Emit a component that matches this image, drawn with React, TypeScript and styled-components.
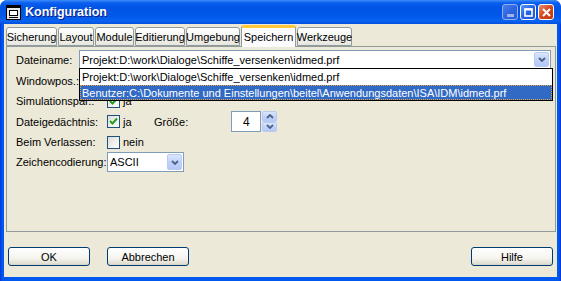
import styled, { createGlobalStyle } from "styled-components";

const GlobalStyle = createGlobalStyle`
  body {
    margin: 0;
    font-family: "Liberation Sans", Arial, sans-serif;
    font-size: 11px;
    color: #000;
  }
`;

const tabs = [
  { label: "Sicherung", w: 51 },
  { label: "Layout", w: 36 },
  { label: "Module", w: 39 },
  { label: "Editierung", w: 50 },
  { label: "Umgebung", w: 54 },
  { label: "Speichern", w: 55, active: true },
  { label: "Werkzeuge", w: 55 },
];

const Chevron = ({ down = true }: { down?: boolean }) => (
  <svg width="8" height="5" viewBox="0 0 8 5">
    <path
      d={down ? "M1 1 L4 4 L7 1" : "M1 4 L4 1 L7 4"}
      fill="none"
      stroke="#4D6185"
      strokeWidth="1.8"
    />
  </svg>
);

const CheckMark = () => (
  <svg width="9" height="9" viewBox="0 0 9 9">
    <path d="M1 4 L3.5 6.5 L8 1.5" fill="none" stroke="#21A121" strokeWidth="2" />
  </svg>
);

const WinIcon = () => (
  <svg width="15" height="15" viewBox="0 0 15 15">
    <rect x="0.5" y="0.5" width="14" height="14" fill="#E8E8E8" stroke="#000" />
    <rect x="1" y="1" width="13" height="2" fill="#000" />
    <rect x="3.5" y="5.5" width="8" height="5" fill="#FFF" stroke="#000" />
    <rect x="3" y="12" width="9" height="1" fill="#000" />
  </svg>
);

const App = () => {
  return (
    <>
      <GlobalStyle />
      <Window>
        <TitleBar>
          <WinIcon />
          <Title>Konfiguration</Title>
          <Controls>
            <CtrlBtn kind="min">
              <svg width="7" height="3" viewBox="0 0 7 3">
                <rect width="7" height="3" fill="#9DB3EE" />
              </svg>
            </CtrlBtn>
            <CtrlBtn kind="max">
              <svg width="9" height="9" viewBox="0 0 9 9">
                <rect x="1" y="1" width="7" height="7" fill="none" stroke="#fff" strokeWidth="1.6" />
                <rect x="0.5" y="0.5" width="8" height="2" fill="#fff" />
              </svg>
            </CtrlBtn>
            <CtrlBtn kind="close">
              <svg width="9" height="9" viewBox="0 0 9 9">
                <path d="M1 1 L8 8 M8 1 L1 8" stroke="#fff" strokeWidth="2" />
              </svg>
            </CtrlBtn>
          </Controls>
        </TitleBar>
        <Client>
          <TabRow>
            {tabs.map((t) => (
              <Tab key={t.label} w={t.w} active={t.active}>
                {t.label}
              </Tab>
            ))}
          </TabRow>
          <Panel>
            <Row top={3} h={19}>
              <Label w={63}>Dateiname:</Label>
              <Combo w={472}>
                <ComboText>Projekt:D:\work\Dialoge\Schiffe_versenken\idmed.prf</ComboText>
                <ArrowBtn>
                  <Chevron />
                </ArrowBtn>
                <DropList>
                  <ListItem>Projekt:D:\work\Dialoge\Schiffe_versenken\idmed.prf</ListItem>
                  <ListItem selected>
                    Benutzer:C:\Dokumente und Einstellungen\beitel\Anwendungsdaten\ISA\IDM\idmed.prf
                  </ListItem>
                </DropList>
              </Combo>
            </Row>
            <Row top={2} h={20}>
              <Label w={91}>Windowpos.:</Label>
            </Row>
            <Row h={20}>
              <Label w={91}>Simulationspar.:</Label>
              <Check>
                <CheckMark />
              </Check>
              <CheckText w={34}>ja</CheckText>
            </Row>
            <Row h={21}>
              <Label w={91}>Dateigedächtnis:</Label>
              <Check>
                <CheckMark />
              </Check>
              <CheckText w={34}>ja</CheckText>
              <Label w={77}>Größe:</Label>
              <SpinEdit>4</SpinEdit>
              <SpinBtns>
                <SpinBtn>
                  <Chevron down={false} />
                </SpinBtn>
                <SpinBtn>
                  <Chevron />
                </SpinBtn>
              </SpinBtns>
            </Row>
            <Row h={20}>
              <Label w={91}>Beim Verlassen:</Label>
              <Check />
              <CheckText w={34}>nein</CheckText>
            </Row>
            <Row h={20}>
              <Label w={91}>Zeichencodierung:</Label>
              <Combo w={77}>
                <ComboText>ASCII</ComboText>
                <ArrowBtn>
                  <Chevron />
                </ArrowBtn>
              </Combo>
            </Row>
          </Panel>
          <ButtonRow>
            <Button>OK</Button>
            <Button>Abbrechen</Button>
            <Spacer />
            <Button>Hilfe</Button>
          </ButtonRow>
        </Client>
      </Window>
    </>
  );
};

export default App;

const Window = styled.div`
  width: 561px;
  height: 281px;
  box-sizing: border-box;
  background: linear-gradient(90deg, #0831D9 0px, #0058EE 2px, #0058EE calc(100% - 2px), #0831D9 100%);
  border-radius: 7px 7px 0 0;
  display: flex;
  flex-direction: column;
  overflow: hidden;
`;

const TitleBar = styled.div`
  height: 24px;
  flex-shrink: 0;
  display: flex;
  align-items: center;
  padding: 0 4px 0 6px;
  background: linear-gradient(
    180deg,
    #3C8CF8 0px,
    #0A5EF0 3px,
    #0054E3 8px,
    #0058EA 16px,
    #0A62F2 21px,
    #0050DA 24px
  );
  border-radius: 7px 7px 0 0;
`;

const Title = styled.div`
  margin-left: 4px;
  color: #fff;
  font-weight: bold;
  font-size: 12.5px;
  text-shadow: 1px 1px #0A1883;
  flex: 1;
`;

const Controls = styled.div`
  display: flex;
  gap: 2px;
  margin-right: 3px;
`;

const CtrlBtn = styled.div<{ kind: string }>`
  width: 16px;
  height: 16px;
  box-sizing: border-box;
  border: 1px solid ${({ kind }) => (kind === "min" ? "#8FAEF0" : "#fff")};
  border-radius: 3px;
  display: flex;
  align-items: center;
  justify-content: center;
  background: ${({ kind }) =>
    kind === "close"
      ? "linear-gradient(135deg, #E58F70, #D3471C 50%, #C2350E)"
      : kind === "max"
      ? "linear-gradient(135deg, #5A95FB, #2463E6 50%, #1F55D8)"
      : "linear-gradient(135deg, #4A80EE, #2F64DF 50%, #2A5BD6)"};
  svg {
    margin-top: ${({ kind }) => (kind === "min" ? "6px" : "0")};
  }
`;

const Client = styled.div`
  flex: 1;
  margin: 0 4px 4px 4px;
  background: #ECE9D8;
  display: flex;
  flex-direction: column;
`;

const TabRow = styled.div`
  height: 22px;
  display: flex;
  align-items: flex-end;
  padding-left: 2px;
  position: relative;
  z-index: 1;
`;

const Tab = styled.div<{ w: number; active?: boolean }>`
  width: ${({ w }) => w}px;
  height: ${({ active }) => (active ? 22 : 19)}px;
  margin-right: 1px;
  margin-bottom: ${({ active }) => (active ? -1 : 0)}px;
  box-sizing: border-box;
  border: 1px solid #919B9C;
  border-bottom: ${({ active }) => (active ? "none" : "1px solid #919B9C")};
  border-top: ${({ active }) => (active ? "3px solid #FFC83C" : "1px solid #919B9C")};
  border-radius: 3px 3px 0 0;
  background: ${({ active }) =>
    active ? "#FCFCFE" : "linear-gradient(180deg, #FFFFFF, #F3F3EF 60%, #E6E5DE)"};
  display: flex;
  align-items: center;
  justify-content: center;
  padding-bottom: ${({ active }) => (active ? 2 : 0)}px;
  white-space: nowrap;
`;

const Panel = styled.div`
  margin: 0 1px 0 2px;
  height: 186px;
  box-sizing: border-box;
  border: 1px solid #919B9C;
  padding-left: 9px;
  display: flex;
  flex-direction: column;
`;

const Row = styled.div<{ top?: number; h: number }>`
  height: ${({ h }) => h}px;
  margin-top: ${({ top }) => top || 0}px;
  display: flex;
  align-items: center;
  flex-shrink: 0;
`;

const Label = styled.div<{ w: number }>`
  width: ${({ w }) => w}px;
  white-space: nowrap;
  flex-shrink: 0;
`;

const Combo = styled.div<{ w: number }>`
  width: ${({ w }) => w}px;
  height: 100%;
  box-sizing: border-box;
  border: 1px solid #7F9DB9;
  background: #fff;
  display: flex;
  align-items: center;
  position: relative;
  padding: 1px 1px 1px 2px;
`;

const ComboText = styled.div`
  flex: 1;
  white-space: nowrap;
  overflow: hidden;
`;

const ArrowBtn = styled.div`
  width: 15px;
  height: 100%;
  box-sizing: border-box;
  border: 1px solid #B9CBF3;
  border-radius: 2px;
  background: linear-gradient(180deg, #DCE6FD, #C2D3FB 50%, #B4C8F6);
  display: flex;
  align-items: center;
  justify-content: center;
`;

const DropList = styled.div`
  position: absolute;
  left: -1px;
  top: 17px;
  width: 474px;
  height: 33px;
  box-sizing: border-box;
  border: 1px solid #000;
  background: #fff;
  z-index: 2;
`;

const ListItem = styled.div<{ selected?: boolean }>`
  height: ${({ selected }) => (selected ? 15 : 16)}px;
  box-sizing: border-box;
  padding-left: 1px;
  display: flex;
  align-items: center;
  white-space: nowrap;
  background: ${({ selected }) => (selected ? "#316AC5" : "#fff")};
  color: ${({ selected }) => (selected ? "#fff" : "#000")};
  border: 1px dotted ${({ selected }) => (selected ? "#E8A33D" : "transparent")};
`;

const Check = styled.div`
  width: 13px;
  height: 13px;
  box-sizing: border-box;
  border: 1px solid #1C5180;
  background: linear-gradient(135deg, #DCDCD7, #FFFFFF);
  display: flex;
  align-items: center;
  justify-content: center;
  flex-shrink: 0;
`;

const CheckText = styled.div<{ w: number }>`
  width: ${({ w }) => w}px;
  padding-left: 3px;
  box-sizing: border-box;
  flex-shrink: 0;
`;

const SpinEdit = styled.div`
  width: 30px;
  height: 21px;
  box-sizing: border-box;
  border: 1px solid #7F9DB9;
  background: #fff;
  display: flex;
  align-items: center;
  padding-left: 11px;
  font-size: 12px;
`;

const SpinBtns = styled.div`
  margin-left: 1px;
  width: 15px;
  height: 21px;
  display: flex;
  flex-direction: column;
`;

const SpinBtn = styled.div`
  flex: 1;
  box-sizing: border-box;
  border: 1px solid #B9CBF3;
  border-radius: 2px;
  background: linear-gradient(180deg, #DCE6FD, #C2D3FB 50%, #B4C8F6);
  display: flex;
  align-items: center;
  justify-content: center;
`;

const ButtonRow = styled.div`
  display: flex;
  margin-top: 15px;
  padding: 0 4px;
  gap: 17px;
`;

const Spacer = styled.div`
  flex: 1;
`;

const Button = styled.div`
  width: 82px;
  height: 19px;
  box-sizing: border-box;
  border: 1px solid #003C74;
  border-radius: 3px;
  background: linear-gradient(180deg, #FFFFFF, #F5F4EF 60%, #E3E0D4 90%, #D6D0C5);
  display: flex;
  align-items: center;
  justify-content: center;
`;
